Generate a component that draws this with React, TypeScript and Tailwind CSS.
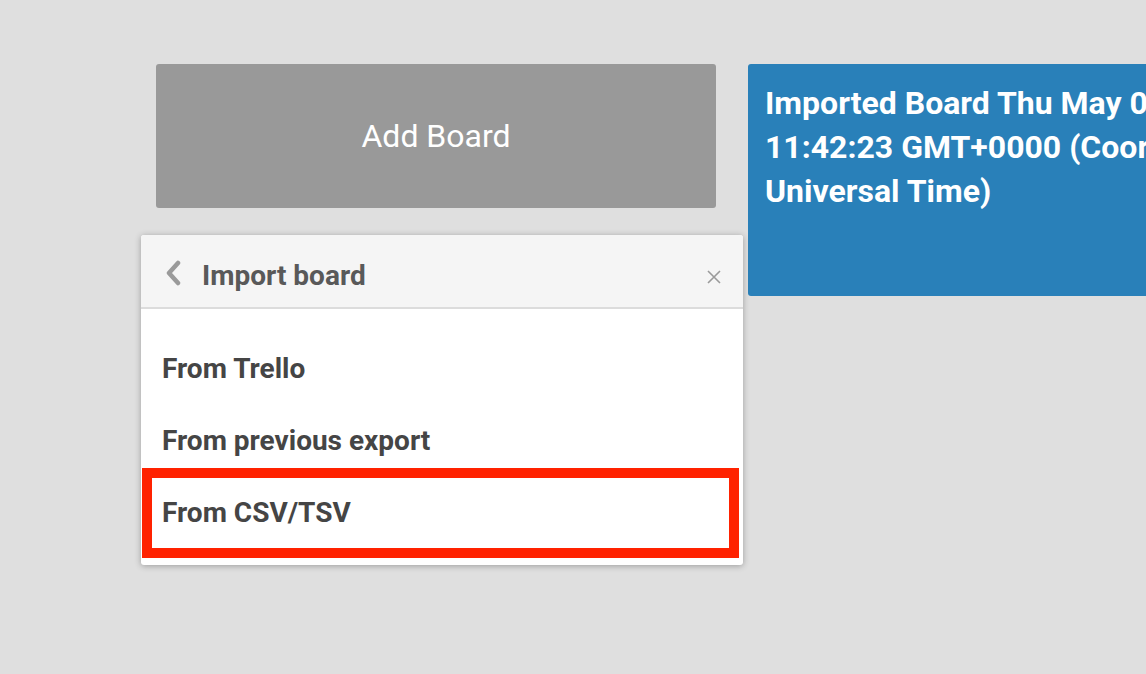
import React from "react";

export default function App() {
  return (
    <div
      className="relative w-full h-[674px] overflow-hidden bg-[#dfdfdf]"
      style={{ fontFamily: "Roboto, 'Liberation Sans', sans-serif" }}
    >
      <div className="flex items-start gap-8 pl-[156px] pt-16">
        <button className="w-[560px] h-[144px] shrink-0 rounded-[3px] bg-[#999999] text-[32px] font-normal text-white flex items-center justify-center">
          Add Board
        </button>
        <div className="w-[580px] h-[232px] shrink-0 rounded-[3px] bg-[#2980b9] px-[17px] pt-[17px] text-[32px] font-bold leading-[44px] text-white">
          Imported Board Thu May 09 2019 11:42:23 GMT+0000 (Coordinated Universal Time)
        </div>
      </div>

      <div className="absolute left-[141px] top-[235px] w-[602px] rounded-[3px] bg-white shadow-[0_1px_6px_rgba(0,0,0,0.3)]">
        <div className="flex h-[74px] items-center border-b-2 border-[#dcdcdc] bg-[#f5f5f5] rounded-t-[3px] pt-[9px] pl-[23px] pr-[22px]">
          <svg width="18" height="26" viewBox="0 0 18 26" className="shrink-0 -mt-[6px]">
            <polyline
              points="14,3 5,13 14,23"
              fill="none"
              stroke="#9a9a9a"
              strokeWidth="4.5"
              strokeLinecap="round"
              strokeLinejoin="round"
            />
          </svg>
          <span className="ml-[20px] text-[28px] font-bold text-[#595959]">Import board</span>
          <svg width="14" height="14" viewBox="0 0 14 14" className="ml-auto shrink-0 mt-[2px]">
            <path d="M1 1 L13 13 M13 1 L1 13" stroke="#9a9a9a" strokeWidth="1.6" fill="none" />
          </svg>
        </div>
        <ul className="pt-[24px] pb-[16px]">
          <li className="flex h-[72px] items-center pl-[21px] text-[28px] font-bold text-[#454545]">From Trello</li>
          <li className="flex h-[72px] items-center pl-[21px] text-[28px] font-bold text-[#454545]">From previous export</li>
          <li className="flex h-[72px] items-center pl-[21px] text-[28px] font-bold text-[#454545]">From CSV/TSV</li>
        </ul>
        <div className="pointer-events-none absolute left-px top-[233px] h-[90px] w-[597px] border-[10px] border-[#ff2200]" />
      </div>
    </div>
  );
}
